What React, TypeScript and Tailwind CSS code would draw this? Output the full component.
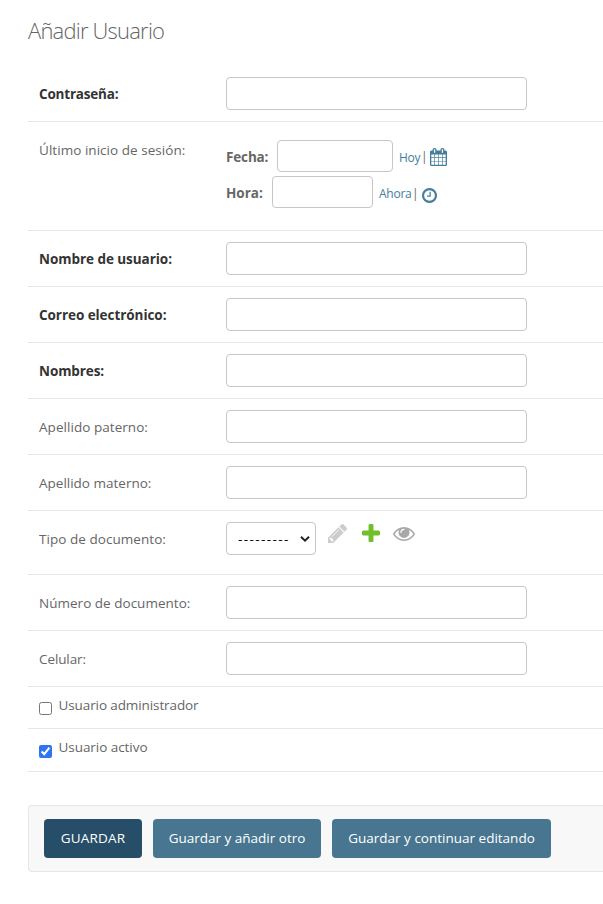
import type { ReactNode } from 'react';

const inputBase = 'block rounded border border-[#c6c6c6] bg-white outline-none';

function Row({ label, bold = false, tracking, children }: { label: string; bold?: boolean; tracking: string; children?: ReactNode }) {
  return (
    <div className="flex h-14 items-start border-b border-[#e6e6e6] pt-[11px] pl-[11px]">
      <label className={`w-[187px] shrink-0 whitespace-nowrap pt-[7px] leading-5 ${tracking} ${bold ? 'font-bold text-[#333]' : 'text-[#666]'}`}>{label}</label>
      {children ?? <input type="text" className={`${inputBase} h-[33px] w-[301px]`} />}
    </div>
  );
}

function Icon({ viewBox, d, className }: { viewBox: string; d: string; className: string }) {
  return (
    <svg viewBox={viewBox} className={`shrink-0 ${className}`} fill="currentColor" preserveAspectRatio="none" aria-hidden="true">
      <path d={d} />
    </svg>
  );
}

const CALENDAR = 'M384 1664h288v-288h-288v288zm352 0h320v-288h-320v288zm-352-352h288v-320h-288v320zm352 0h320v-320h-320v320zm-352-384h288v-288h-288v288zm736 736h320v-288h-320v288zm-384-736h320v-288h-320v288zm768 736h288v-288h-288v288zm-384-352h320v-320h-320v320zm-352-864v-288q0-13-9.5-22.5t-22.5-9.5h-64q-13 0-22.5 9.5t-9.5 22.5v288q0 13 9.5 22.5t22.5 9.5h64q13 0 22.5-9.5t9.5-22.5zm736 864h288v-320h-288v320zm-384-384h320v-288h-320v288zm384 0h288v-288h-288v288zm32-480v-288q0-13-9.5-22.5t-22.5-9.5h-64q-13 0-22.5 9.5t-9.5 22.5v288q0 13 9.5 22.5t22.5 9.5h64q13 0 22.5-9.5t9.5-22.5zm384-64v1280q0 52-38 90t-90 38h-1408q-52 0-90-38t-38-90v-1280q0-52 38-90t90-38h128v-96q0-66 47-113t113-47h64q66 0 113 47t47 113v96h384v-96q0-66 47-113t113-47h64q66 0 113 47t47 113v96h128q52 0 90 38t38 90z';
const CLOCK = 'M1024 544v448q0 14-9 23t-23 9h-320q-14 0-23-9t-9-23v-64q0-14 9-23t23-9h224v-352q0-14 9-23t23-9h64q14 0 23 9t9 23zm416 352q0-148-73-273t-198-198-273-73-273 73-198 198-73 273 73 273 198 198 273 73 273-73 198-198 73-273zm224 0q0 209-103 385.5t-279.5 279.5-385.5 103-385.5-103-279.5-279.5-103-385.5 103-385.5 279.5-279.5 385.5-103 385.5 103 279.5 279.5 103 385.5z';
const PENCIL = 'M491 1536l91-91-235-235-91 91v107h128v128h107zm523-928q0-22-22-22-10 0-17 7l-542 542q-7 7-7 17 0 22 22 22 10 0 17-7l542-542q7-7 7-17zm-54-192l416 416-832 832h-416v-416zm683 96q0 53-37 90l-166 166-416-416 166-165q36-38 90-38 53 0 91 38l235 234q37 39 37 91z';
const PLUS = 'M1600 796v192q0 40-28 68t-68 28h-416v416q0 40-28 68t-68 28h-192q-40 0-68-28t-28-68v-416h-416q-40 0-68-28t-28-68v-192q0-40 28-68t68-28h416v-416q0-40 28-68t68-28h192q40 0 68 28t28 68v416h416q40 0 68 28t28 68z';
const EYE = 'M1664 960q-152-236-381-353 61 104 61 225 0 185-131.5 316.5t-316.5 131.5-316.5-131.5-131.5-316.5q0-121 61-225-229 117-381 353 133 205 333.5 326.5t434.5 121.5 434.5-121.5 333.5-326.5zm-720-384q0-20-14-34t-34-14q-125 0-214.5 89.5t-89.5 214.5q0 20 14 34t34 14 34-14 14-34q0-86 61-147t147-61q20 0 34-14t14-34zm848 384q0 34-20 69-140 230-376.5 368.5t-499.5 138.5-499.5-139-376.5-368q-20-35-20-69t20-69q140-229 376.5-368t499.5-139 499.5 139 376.5 368q20 35 20 69z';

export default function App() {
  return (
    <div className="h-[904px] w-[603px] overflow-hidden bg-white pl-7 font-['Open_Sans','Noto_Sans',sans-serif] text-[13.5px] text-[#666]">
      <h1 className="h-[66px] pt-[15px] text-[22px] leading-[30px] font-light tracking-[-0.8px] text-[#666]">Añadir Usuario</h1>

      <Row label="Contraseña:" bold tracking="tracking-[-0.2px]" />
      <div className="flex h-[109px] border-b border-[#e6e6e6] pl-[11px]">
        <label className="w-[187px] shrink-0 whitespace-nowrap pt-[18px] leading-5 tracking-[0.04px]">Último inicio de sesión:</label>
        <div className="flex flex-col gap-1 pt-[18px]">
          <div className="flex h-8 items-center">
            <span className="w-[51px] pt-[2px] font-bold tracking-[-0.15px]">Fecha:</span>
            <input type="text" className={`${inputBase} h-8 w-[116px]`} />
            <a className="ml-[6px] w-[21px] pt-[3px] text-[12px] tracking-[-0.3px] text-[#447e9b]">Hoy</a>
            <span className="ml-px w-[9px] pt-[2px] text-[12px]">|</span>
            <Icon viewBox="256 0 1664 1792" d={CALENDAR} className="mt-[2px] h-[18px] w-[17px] text-[#447e9b]" />
          </div>
          <div className="flex h-8 items-center">
            <span className="w-[46px] pt-[2px] font-bold">Hora:</span>
            <input type="text" className={`${inputBase} h-8 w-[101px]`} />
            <a className="ml-[6px] w-[32px] pt-[3px] text-[12px] tracking-[-0.25px] text-[#447e9b]">Ahora</a>
            <span className="ml-px w-[10px] pt-[3px] text-[12px]">|</span>
            <Icon viewBox="128 128 1536 1536" d={CLOCK} className="mt-[6px] size-[15px] text-[#447e9b]" />
          </div>
        </div>
      </div>
      <Row label="Nombre de usuario:" bold tracking="tracking-[-0.05px]" />
      <Row label="Correo electrónico:" bold tracking="tracking-[-0.06px]" />
      <Row label="Nombres:" bold tracking="tracking-[-0.1px]" />
      <Row label="Apellido paterno:" tracking="tracking-[0.05px]" />
      <Row label="Apellido materno:" tracking="tracking-[0px]" />
      <div className="flex h-16 items-start border-b border-[#e6e6e6] pt-[11px] pl-[11px]">
        <label className="w-[187px] shrink-0 whitespace-nowrap pt-[7px] leading-5 tracking-[0.05px]">Tipo de documento:</label>
        <button type="button" className="flex h-[33px] w-[90px] items-center justify-between rounded border border-[#c6c6c6] pr-[5px] pl-[11px] text-black">
          <span className="pt-[2px] text-[13.5px] tracking-[1.4px]">---------</span>
          <svg viewBox="0 0 10 6" className="h-[6px] w-[10px]" fill="none" stroke="#222" strokeWidth="2"><path d="M1 .8 5 4.6 9 .8" /></svg>
        </button>
        <Icon viewBox="128 149 1515 1515" d={PENCIL} className="mt-[2px] ml-[12px] size-[19px] text-[#ccc]" />
        <Icon viewBox="192 188 1408 1408" d={PLUS} className="mt-[2px] ml-[15px] size-[18px] text-[#70bf2b]" />
        <Icon viewBox="0 384 1792 1152" d={EYE} className="mt-[5px] ml-[13px] h-[14px] w-[22px] text-[#a8a8a8]" />
      </div>
      <Row label="Número de documento:" tracking="tracking-[0.02px]" />
      <Row label="Celular:" tracking="tracking-[-0.1px]" />
      <div className="flex h-[42px] items-start border-b border-[#e6e6e6] pl-[11px]">
        <input type="checkbox" className="mt-[15px] size-[13px]" />
        <label className="ml-[6.5px] pt-[8px] leading-5 tracking-[-0.1px]">Usuario administrador</label>
      </div>
      <div className="flex h-[43px] items-start border-b border-[#e6e6e6] pl-[11px]">
        <input type="checkbox" defaultChecked className="mt-[16px] size-[13px] accent-[#2f74f0]" />
        <label className="ml-[6.5px] pt-[8px] leading-5 tracking-[-0.05px]">Usuario activo</label>
      </div>

      <div className="mt-[33px] flex h-[67px] rounded-l border border-r-0 border-[#e6e6e6] bg-[#f8f8f8] pt-[13px] pl-[15px] text-white">
        <button type="button" className="mr-[11px] h-[39px] w-[98px] shrink-0 rounded bg-[#264e68] tracking-[0.2px]">GUARDAR</button>
        <button type="button" className="mr-[11px] h-[39px] w-[168px] shrink-0 rounded bg-[#487691]">Guardar y añadir otro</button>
        <button type="button" className="h-[39px] w-[219px] shrink-0 rounded bg-[#487691]">Guardar y continuar editando</button>
      </div>
    </div>
  );
}
